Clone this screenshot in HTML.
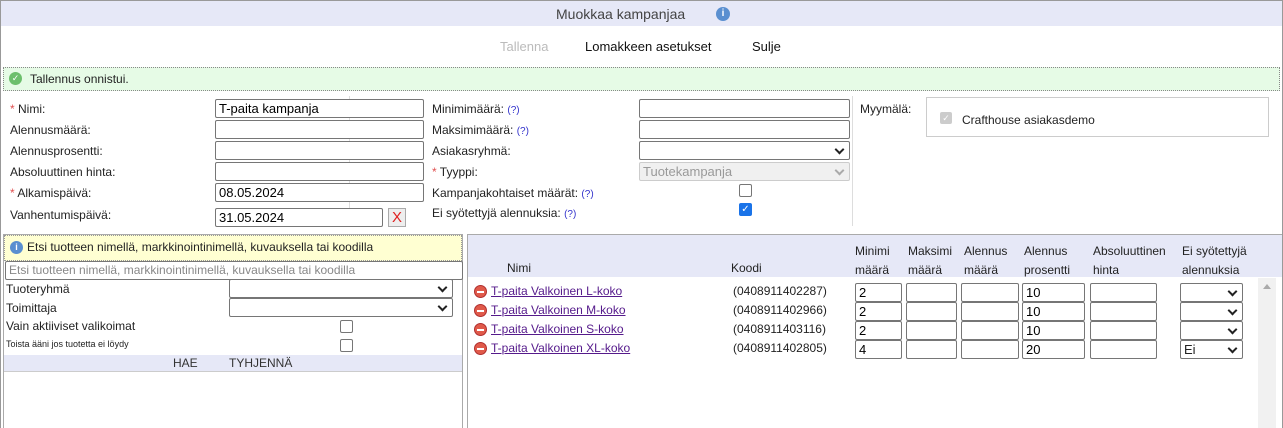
<!DOCTYPE html>
<html><head><meta charset="utf-8"><style>
*{box-sizing:border-box;margin:0;padding:0}
body{width:1283px;height:428px;overflow:hidden;background:#fff;font-family:"Liberation Sans",sans-serif;font-size:12px;color:#222;position:relative}
.a{position:absolute;white-space:nowrap}
.inp{position:absolute;border:1px solid #767676;border-radius:2px;background:#fff;height:19px;font-size:13px;padding:1px 3px;line-height:15px;color:#000}
.sel{position:absolute;border:1px solid #767676;border-radius:2px;background:#fff;height:19px;font-size:13px;padding:1px 3px;line-height:15px}
.sel:after{content:"";position:absolute;right:6px;top:4px;width:5px;height:5px;border-right:2px solid #222;border-bottom:2px solid #222;transform:rotate(45deg)}
.sel.dis{background:#f0f0f0;border-color:#ccc;color:#999}
.sel.dis:after{border-color:#aaa}
.cb{position:absolute;width:13px;height:13px;border:1px solid #767676;border-radius:2px;background:#fff}
.req{color:#e05050}
.q{color:#33c;font-size:10px}
.lnk{color:#551a8b;text-decoration:underline}
.minus{position:absolute;width:13px;height:13px;border-radius:50%;background:#e05a4a;border:1px solid #b03030}
.minus:after{content:"";position:absolute;left:2px;top:5px;width:7px;height:2px;background:#fff}
</style></head><body>
<div class="a" style="left:0;top:0;width:1283px;height:428px;border:1px solid #999;border-bottom:none"></div>
<div class="a" style="left:1px;top:1px;width:1281px;height:25px;background:#e6e8f7"></div>
<div class="a" style="left:556px;top:6px;font-size:14px;color:#444">Muokkaa kampanjaa</div>
<div class="a" style="left:716px;top:7px;width:14px;height:14px;border-radius:50%;background:#5a8fd0;color:#fff;font-size:10px;text-align:center;line-height:14px;font-weight:bold">i</div>
<div class="a" style="left:500px;top:39px;font-size:13px;color:#bbb">Tallenna</div>
<div class="a" style="left:585px;top:39px;font-size:13px;color:#111">Lomakkeen asetukset</div>
<div class="a" style="left:752px;top:39px;font-size:13px;color:#111">Sulje</div>
<div class="a" style="left:3px;top:67px;width:1277px;height:24px;background:#e6fbe6;border:1px dotted #888"></div>
<div class="a" style="left:9px;top:72px;width:13px;height:13px;border-radius:50%;background:#6cbf6c;color:#fff;font-size:9px;text-align:center;line-height:13px">✓</div>
<div class="a" style="left:30px;top:72px">Tallennus onnistui.</div>

<div class="a" style="left:349px;top:96px;width:1px;height:130px;background:#ddd"></div>
<div class="a" style="left:852px;top:96px;width:1px;height:130px;background:#ddd"></div>

<div class="a" style="left:10px;top:102px"><span class="req">*</span> Nimi:</div>
<div class="a" style="left:10px;top:123px">Alennusmäärä:</div>
<div class="a" style="left:10px;top:144px">Alennusprosentti:</div>
<div class="a" style="left:10px;top:165px">Absoluuttinen hinta:</div>
<div class="a" style="left:10px;top:186px"><span class="req">*</span> Alkamispäivä:</div>
<div class="a" style="left:10px;top:208px">Vanhentumispäivä:</div>
<div class="inp" style="left:215px;top:99px;width:209px">T-paita kampanja</div>
<div class="inp" style="left:215px;top:120px;width:209px"></div>
<div class="inp" style="left:215px;top:141px;width:209px"></div>
<div class="inp" style="left:215px;top:162px;width:209px"></div>
<div class="inp" style="left:215px;top:183px;width:209px">08.05.2024</div>
<div class="inp" style="left:215px;top:208px;width:168px">31.05.2024</div>
<div class="a" style="left:388px;top:208px;width:18px;height:19px;border:1px solid #aaa;background:#eee;color:#e02020;font-size:15px;text-align:center;line-height:17px">X</div>

<div class="a" style="left:432px;top:102px">Minimimäärä: <span class="q">(?)</span></div>
<div class="a" style="left:432px;top:123px">Maksimimäärä: <span class="q">(?)</span></div>
<div class="a" style="left:432px;top:144px">Asiakasryhmä:</div>
<div class="a" style="left:432px;top:165px"><span class="req">*</span> Tyyppi:</div>
<div class="a" style="left:432px;top:186px">Kampanjakohtaiset määrät: <span class="q">(?)</span></div>
<div class="a" style="left:432px;top:206px">Ei syötettyjä alennuksia: <span class="q">(?)</span></div>
<div class="inp" style="left:639px;top:99px;width:211px"></div>
<div class="inp" style="left:639px;top:120px;width:211px"></div>
<div class="sel" style="left:639px;top:141px;width:211px"></div>
<div class="sel dis" style="left:639px;top:162px;width:211px">Tuotekampanja</div>
<div class="cb" style="left:739px;top:184px"></div>
<div class="cb" style="left:739px;top:203px;background:#1a73e8;border-color:#1a73e8;color:#fff;font-size:10px;line-height:11px;text-align:center">✓</div>

<div class="a" style="left:860px;top:102px">Myymälä:</div>
<div class="a" style="left:926px;top:97px;width:343px;height:40px;border:1px solid #ccc"></div>
<div class="a" style="left:940px;top:112px;width:12px;height:12px;border-radius:2px;background:#ccc;color:#fff;font-size:9px;text-align:center;line-height:12px">✓</div>
<div class="a" style="left:962px;top:113px">Crafthouse asiakasdemo</div>

<!-- left panel -->
<div class="a" style="left:3px;top:234px;width:460px;height:194px;border:1px solid #aaa;border-bottom:none"></div>
<div class="a" style="left:4px;top:235px;width:458px;height:26px;background:#ffffd2;border:1px dotted #999"></div>
<div class="a" style="left:10px;top:241px;width:13px;height:13px;border-radius:50%;background:#5a8fd0;color:#fff;font-size:9px;text-align:center;line-height:13px;font-weight:bold">i</div>
<div class="a" style="left:27px;top:240px">Etsi tuotteen nimellä, markkinointinimellä, kuvauksella tai koodilla</div>
<div class="inp" style="left:5px;top:261px;width:458px;color:#888;font-size:12px">Etsi tuotteen nimellä, markkinointinimellä, kuvauksella tai koodilla</div>
<div class="a" style="left:6px;top:282px">Tuoteryhmä</div>
<div class="a" style="left:6px;top:301px">Toimittaja</div>
<div class="a" style="left:6px;top:319px">Vain aktiiviset valikoimat</div>
<div class="a" style="left:6px;top:339px;font-size:9px">Toista ääni jos tuotetta ei löydy</div>
<div class="sel" style="left:229px;top:279px;width:224px"></div>
<div class="sel" style="left:229px;top:298px;width:224px"></div>
<div class="cb" style="left:340px;top:320px"></div>
<div class="cb" style="left:340px;top:339px"></div>
<div class="a" style="left:4px;top:355px;width:458px;height:17px;background:#e6e8f7;border-bottom:1px solid #ccc"></div>
<div class="a" style="left:173px;top:356px;color:#333">HAE</div>
<div class="a" style="left:229px;top:356px;color:#333">TYHJENNÄ</div>

<!-- right panel -->
<div class="a" style="left:467px;top:234px;width:815px;height:194px;border:1px solid #aaa;border-bottom:none;border-right:none"></div>
<div class="a" style="left:468px;top:235px;width:814px;height:42px;background:#e6e8f7"></div>
<div class="a" style="left:507px;top:261px">Nimi</div>
<div class="a" style="left:731px;top:261px">Koodi</div>
<div class="a" style="left:855px;top:242px;line-height:19px">Minimi<br>määrä</div>
<div class="a" style="left:908px;top:242px;line-height:19px">Maksimi<br>määrä</div>
<div class="a" style="left:964px;top:242px;line-height:19px">Alennus<br>määrä</div>
<div class="a" style="left:1024px;top:242px;line-height:19px">Alennus<br>prosentti</div>
<div class="a" style="left:1093px;top:242px;line-height:19px">Absoluuttinen<br>hinta</div>
<div class="a" style="left:1182px;top:242px;line-height:19px">Ei syötettyjä<br>alennuksia</div>
<div class="a" style="left:1258px;top:278px;width:18px;height:150px;background:#f1f1f1"></div>
<div class="a" style="left:1263px;top:284px;width:0;height:0;border-left:4px solid transparent;border-right:4px solid transparent;border-bottom:5px solid #aaa"></div>

<div class="minus" style="left:474px;top:285px"></div>
<div class="minus" style="left:474px;top:304px"></div>
<div class="minus" style="left:474px;top:323px"></div>
<div class="minus" style="left:474px;top:342px"></div>
<div class="a lnk" style="left:491px;top:284px">T-paita Valkoinen L-koko</div>
<div class="a lnk" style="left:491px;top:303px">T-paita Valkoinen M-koko</div>
<div class="a lnk" style="left:491px;top:322px">T-paita Valkoinen S-koko</div>
<div class="a lnk" style="left:491px;top:341px">T-paita Valkoinen XL-koko</div>
<div class="a" style="left:733px;top:284px">(0408911402287)</div>
<div class="a" style="left:733px;top:303px">(0408911402966)</div>
<div class="a" style="left:733px;top:322px">(0408911403116)</div>
<div class="a" style="left:733px;top:341px">(0408911402805)</div>

<div class="inp" style="left:855px;top:283px;width:47px">2</div><div class="inp" style="left:906px;top:283px;width:51px"></div><div class="inp" style="left:961px;top:283px;width:58px"></div><div class="inp" style="left:1022px;top:283px;width:63px">10</div><div class="inp" style="left:1090px;top:283px;width:67px"></div><div class="sel" style="left:1180px;top:283px;width:63px"></div>
<div class="inp" style="left:855px;top:302px;width:47px">2</div><div class="inp" style="left:906px;top:302px;width:51px"></div><div class="inp" style="left:961px;top:302px;width:58px"></div><div class="inp" style="left:1022px;top:302px;width:63px">10</div><div class="inp" style="left:1090px;top:302px;width:67px"></div><div class="sel" style="left:1180px;top:302px;width:63px"></div>
<div class="inp" style="left:855px;top:321px;width:47px">2</div><div class="inp" style="left:906px;top:321px;width:51px"></div><div class="inp" style="left:961px;top:321px;width:58px"></div><div class="inp" style="left:1022px;top:321px;width:63px">10</div><div class="inp" style="left:1090px;top:321px;width:67px"></div><div class="sel" style="left:1180px;top:321px;width:63px"></div>
<div class="inp" style="left:855px;top:340px;width:47px">4</div><div class="inp" style="left:906px;top:340px;width:51px"></div><div class="inp" style="left:961px;top:340px;width:58px"></div><div class="inp" style="left:1022px;top:340px;width:63px">20</div><div class="inp" style="left:1090px;top:340px;width:67px"></div><div class="sel" style="left:1180px;top:340px;width:63px">Ei</div>
</body></html>
